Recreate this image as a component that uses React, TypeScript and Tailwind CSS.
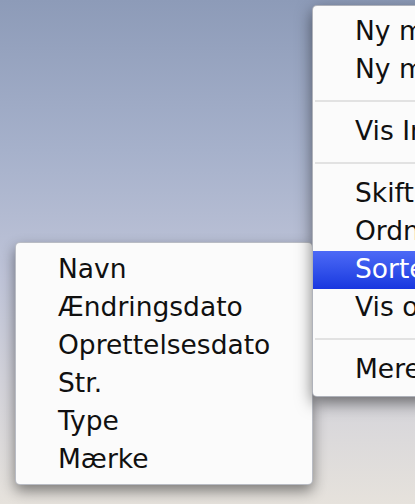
import React from "react";

type Entry = { label?: string; sep?: boolean; active?: boolean };

const mainItems: Entry[] = [
  { label: "Ny mappe" },
  { label: "Ny mappe med markering" },
  { sep: true },
  { label: "Vis Info" },
  { sep: true },
  { label: "Skift baggrund på skrivebordet" },
  { label: "Ordne" },
  { label: "Sorter efter", active: true },
  { label: "Vis oversigtsmuligheder" },
  { sep: true },
  { label: "Mere" },
];

const subItems = ["Navn", "Ændringsdato", "Oprettelsesdato", "Str.", "Type", "Mærke"];

function Item({ label, active }: { label: string; active?: boolean }) {
  return (
    <div
      className={
        "h-[38px] leading-[36px] pl-[42px] pr-4 whitespace-nowrap " +
        (active
          ? "bg-gradient-to-b from-[#4d69f6] to-[#1936df] text-white"
          : "text-[#101010]")
      }
    >
      {label}
    </div>
  );
}

function Sep() {
  return (
    <div className="h-[24px] flex items-center pl-[2px]">
      <div className="h-[2px] w-full bg-[#e2e2e2]" />
    </div>
  );
}

export default function App() {
  return (
    <div
      className="relative w-[415px] h-[504px] overflow-hidden bg-[linear-gradient(180deg,#8d9bb8_0%,#a6b1cb_30%,#bfc4d8_55%,#d2d2da_75%,#e6e2dc_100%)]"
      style={{ fontFamily: '"DejaVu Sans", "Noto Sans", sans-serif' }}
    >
      {/* Submenu */}
      <div className="absolute left-[15px] top-[242px] w-[298px] rounded-[5px] border border-[#8e93a0]/60 bg-[#fbfbfb] pt-[8px] pb-[5px] text-[26.5px] shadow-[0_6px_14px_rgba(0,0,0,0.45)]">
        {subItems.map((s) => (
          <Item key={s} label={s} />
        ))}
      </div>

      {/* Main context menu */}
      <div className="absolute left-[312px] top-[5px] w-[260px] rounded-[5px] border border-[#7d8290]/60 bg-[#fbfbfb] pt-[7px] pb-[7px] text-[26.5px] shadow-[0_6px_16px_rgba(0,0,0,0.5)]">
        {mainItems.map((e, i) =>
          e.sep ? <Sep key={i} /> : <Item key={i} label={e.label!} active={e.active} />
        )}
      </div>
    </div>
  );
}
